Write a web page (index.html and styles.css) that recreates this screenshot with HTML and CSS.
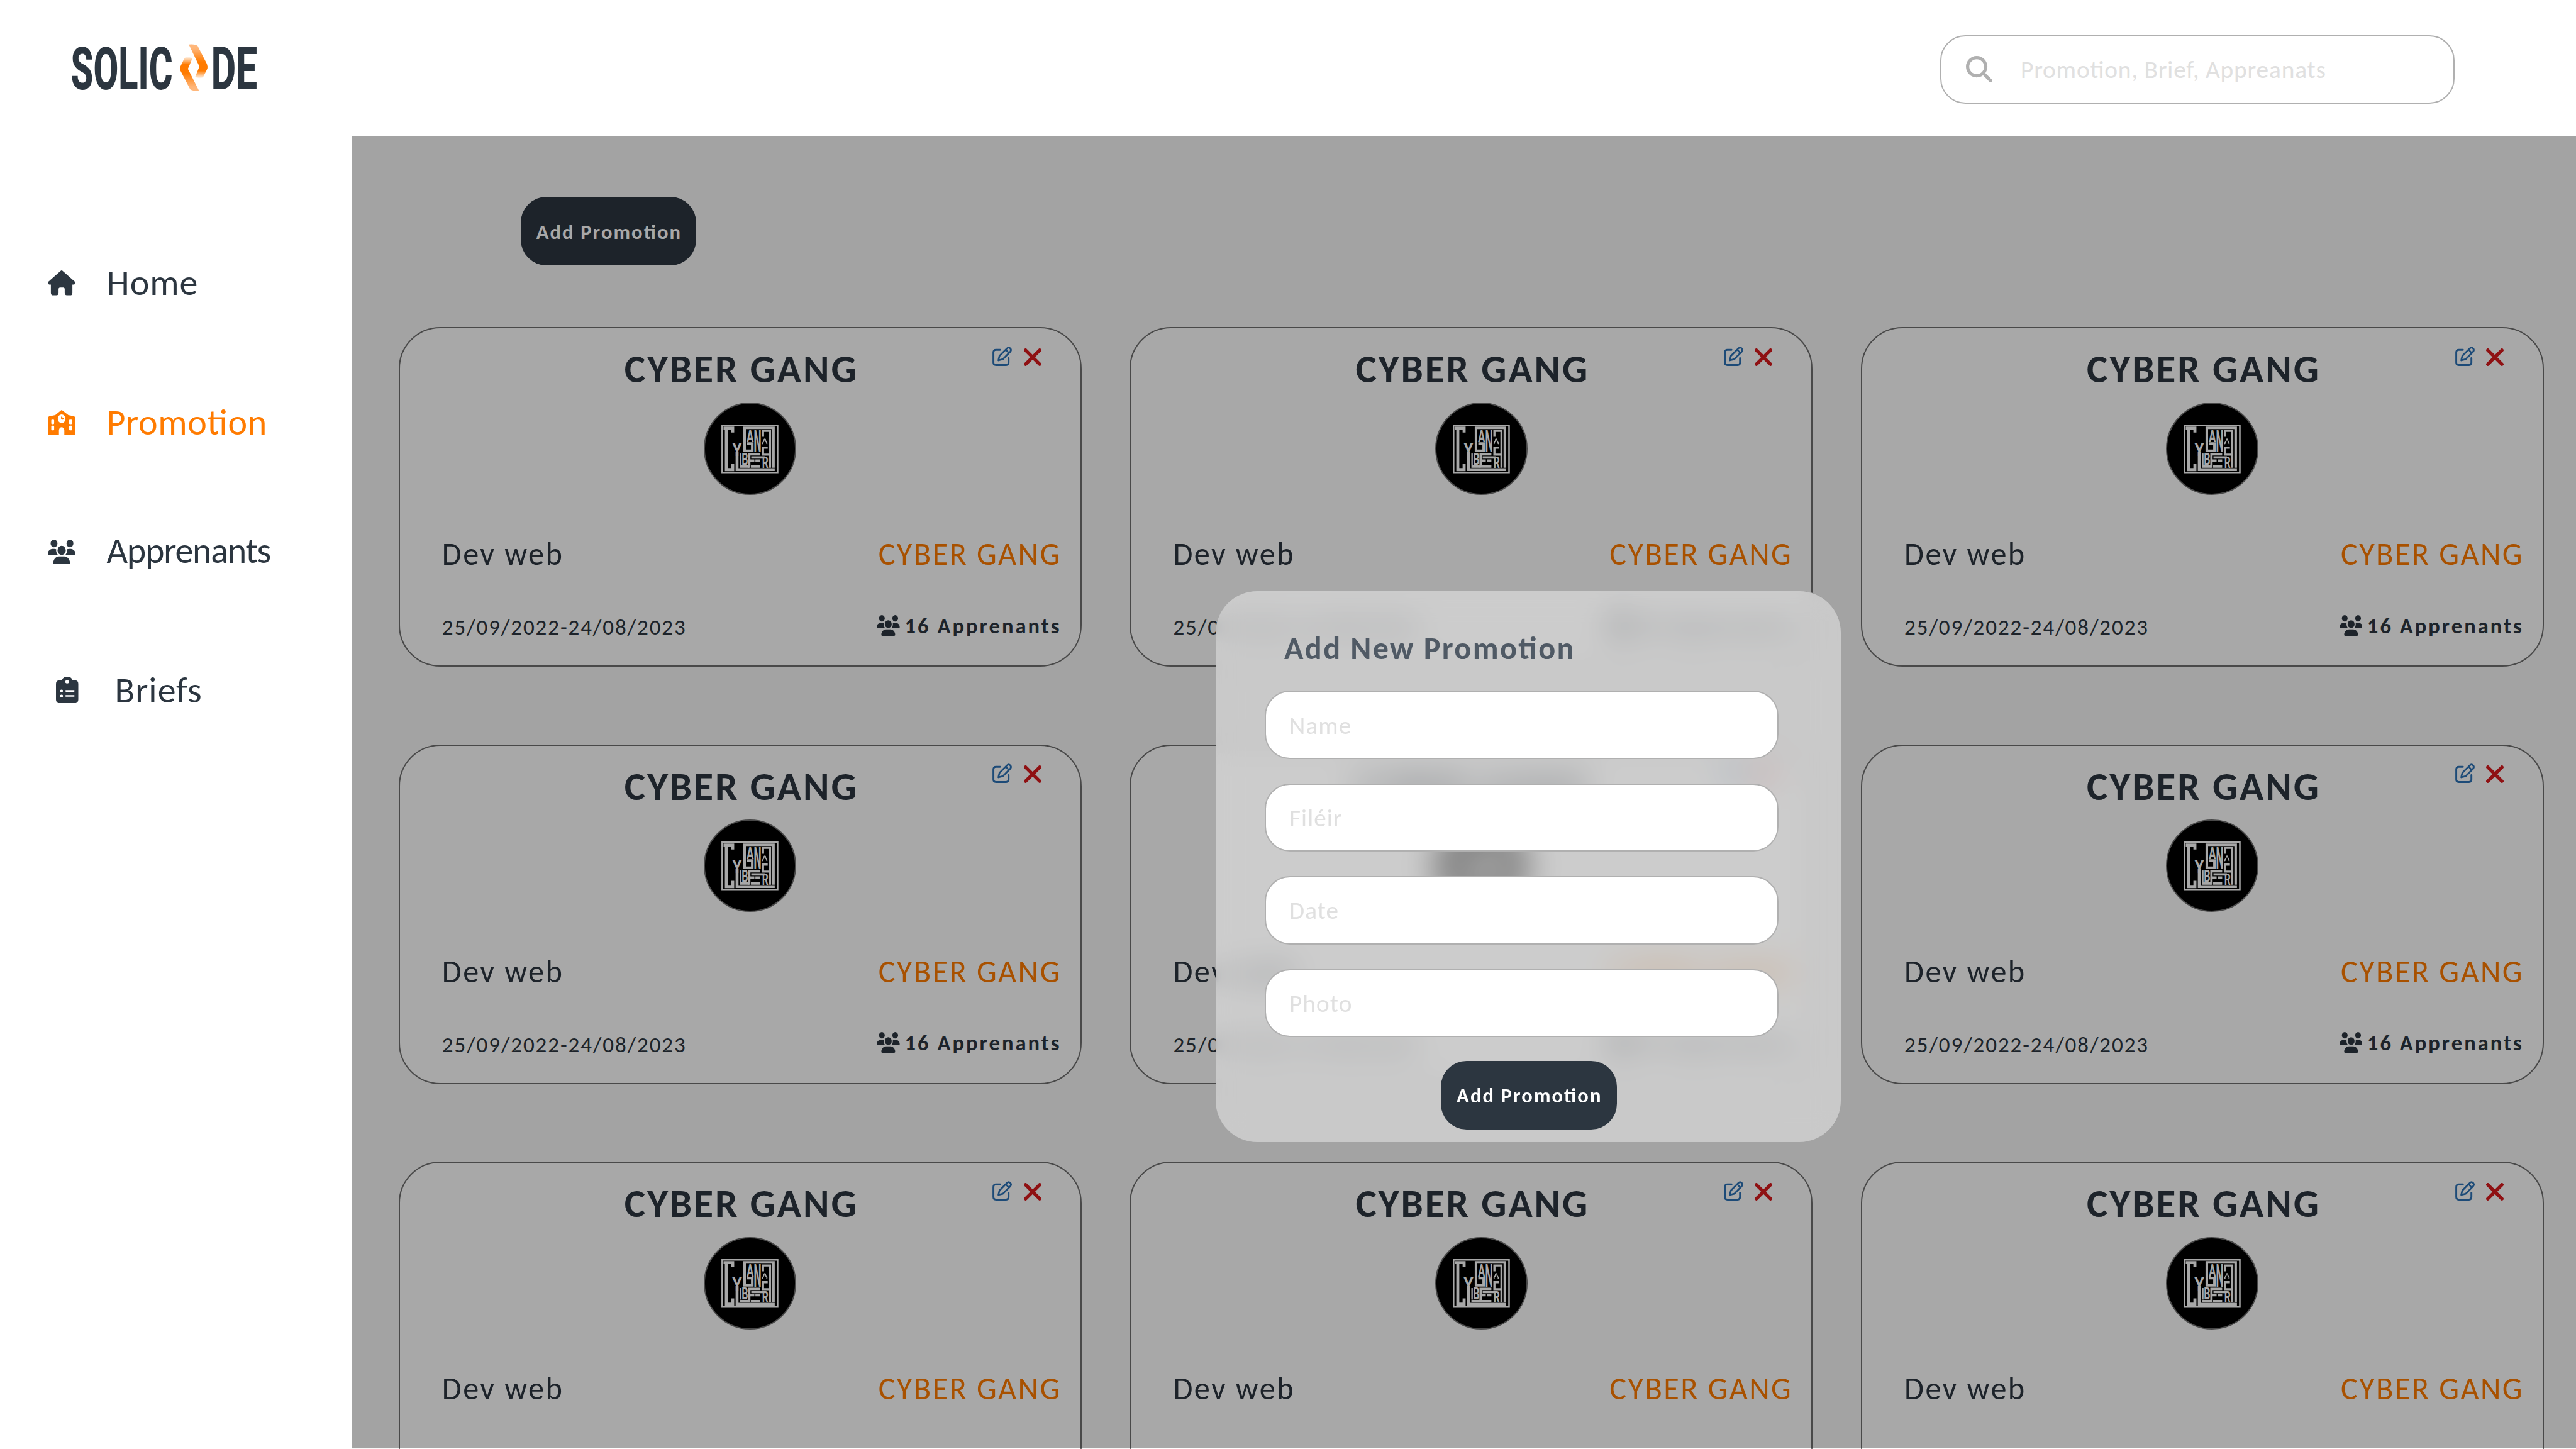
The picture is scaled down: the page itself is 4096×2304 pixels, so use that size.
FILE: index.html
```html
<!DOCTYPE html>
<html lang="fr">
<head>
<meta charset="utf-8">
<title>Solicode - Promotion</title>
<link rel="stylesheet" href="styles.css">
</head>
<body>
<svg class="defs" width="0" height="0" aria-hidden="true">
  <defs>
    <linearGradient id="arrowDown" x1="0" y1="155" x2="0" y2="456" gradientUnits="userSpaceOnUse">
      <stop offset="0" stop-color="#ffb87d"/>
      <stop offset=".12" stop-color="#ffb578"/>
      <stop offset=".52" stop-color="#ff7b00"/>
      <stop offset=".78" stop-color="#ff7b00"/>
      <stop offset="1" stop-color="#ff7b00" stop-opacity=".08"/>
    </linearGradient>
    <linearGradient id="arrowUp" x1="0" y1="569" x2="0" y2="267" gradientUnits="userSpaceOnUse">
      <stop offset="0" stop-color="#ffb87d"/>
      <stop offset=".12" stop-color="#ffb578"/>
      <stop offset=".52" stop-color="#ff7b00"/>
      <stop offset=".78" stop-color="#ff7b00"/>
      <stop offset="1" stop-color="#ff7b00" stop-opacity=".08"/>
    </linearGradient>
    <symbol id="users" viewBox="0 0 640 512" preserveAspectRatio="none">
      <path d="M144 0a80 80 0 1 1 0 160A80 80 0 1 1 144 0zM512 0a80 80 0 1 1 0 160A80 80 0 1 1 512 0zM0 298.7C0 239.8 47.8 192 106.7 192h42.7c15.9 0 31 3.5 44.6 9.7c-1.3 7.2-1.9 14.7-1.9 22.3c0 38.2 16.8 72.5 43.3 96H21.3C9.6 320 0 310.4 0 298.7zM405.3 320h-.7c26.6-23.5 43.3-57.8 43.3-96c0-7.6-.7-15-1.9-22.3c13.6-6.3 28.7-9.7 44.6-9.7h42.7C592.2 192 640 239.8 640 298.7c0 11.8-9.6 21.3-21.3 21.3H405.3zM224 224a96 96 0 1 1 192 0 96 96 0 1 1 -192 0zM128 485.3C128 411.7 187.7 352 261.3 352H378.7C452.3 352 512 411.7 512 485.3c0 14.7-11.9 26.7-26.7 26.7H154.7c-14.7 0-26.7-11.9-26.7-26.7z"/>
    </symbol>
    <symbol id="edit" viewBox="0 0 31 31" overflow="visible">
      <g fill="none" stroke="currentColor" stroke-linecap="round" stroke-linejoin="round">
        <path stroke-width="2.9" d="M12.2 5.3H5.7Q1.6 5.3 1.6 9.2V25.6Q1.6 29.5 5.7 29.5H21.9Q25.7 29.5 25.7 25.6V18.5"/>
        <path stroke-width="2.7" d="M9.5 22L11.2 15L23.2 2.9Q25.8.5 28.4 2.9Q30.8 5.4 28.4 8.2L16.7 20.1Z"/>
        <path stroke-width="2.5" d="M21.6 5.4L25.8 9.8"/>
      </g>
    </symbol>
    <symbol id="cross" viewBox="0 0 28 28">
      <path d="M2.8 2.8L25.2 25.2M25.2 2.8L2.8 25.2" fill="none" stroke="currentColor" stroke-width="5.4" stroke-linecap="round"/>
    </symbol>
    <symbol id="crest" viewBox="145 121 827 827">
      <circle cx="558.5" cy="534.5" r="408" fill="#000" stroke="#707070" stroke-width="11"/>
      <g fill="none" stroke="#fff">
        <path stroke-width="14" d="M310 325H806V747H310Z"/>
        <path stroke-width="27" d="M404 389V349.500H322M347.500 336V735M334 721.500H404V669"/>
        <path stroke-width="23" d="M768.500 704V347H510.500V553H579V488H531"/>
        <path stroke-width="19" d="M675 427V375H738V705M738 587H675V525H717"/>
        <path stroke-width="26" d="M443 560V721.500H780"/>
        <path stroke-width="21" d="M570 613H690M552 705V584H648M552 640.500H598M607 640.500H648M567 694H648"/>
        <path stroke-width="13" d="M475 577V680"/>
        <path stroke-width="22" d="M469 694H552"/>
        <path stroke-width="10" d="M673 494C666 470 684 478 684 462C684 444 698 444 698 462C698 478 716 470 709 494"/>
      </g>
      <g class="crest-type">
        <text x="400" y="600" font-size="162" textLength="87" lengthAdjust="spacingAndGlyphs">Y</text>
        <text x="529" y="473" font-size="157" textLength="62" lengthAdjust="spacingAndGlyphs">A</text>
        <text x="592" y="564" font-size="284" textLength="68" lengthAdjust="spacingAndGlyphs">N</text>
        <text x="484" y="679" font-size="142" textLength="58" lengthAdjust="spacingAndGlyphs">B</text>
        <text x="667" y="705" font-size="140" textLength="56" lengthAdjust="spacingAndGlyphs">R</text>
      </g>
    </symbol>
  </defs>
</svg>

<div class="page">
  <header class="header">
    <svg class="logo" viewBox="100 140 1270 450" preserveAspectRatio="none" role="img" aria-label="Solicode">
      <text x="115" y="557" font-size="530" textLength="680" lengthAdjust="spacingAndGlyphs">SOLIC</text>
      <path fill="url(#arrowDown)" d="M903 155Q947 150 962 168L1024 330Q1030 352 1027 372L998 450Q990 458 970 456L945 448L974 352Z"/>
      <path fill="url(#arrowUp)" d="M971 569Q925 573 912 556L848 392Q842 370 848 350L875 275Q882 266 905 268L928 276L897 373Z"/>
      <text x="1052" y="557" font-size="530" textLength="308" lengthAdjust="spacingAndGlyphs">DE</text>
    </svg>
    <label class="search">
      <svg class="search-icon" viewBox="0 0 512 512"><path d="M416 208c0 45.900-14.900 88.300-40 122.700L502.600 457.400c12.500 12.500 12.500 32.800 0 45.300s-32.800 12.500-45.300 0L330.700 376c-34.400 25.200-76.800 40-122.700 40C93.100 416 0 322.900 0 208S93.100 0 208 0S416 93.100 416 208zM208 352a144 144 0 1 0 0-288 144 144 0 1 0 0 288z"/></svg>
      <span>Promotion, Brief, Appreanats</span>
    </label>
  </header>

  <div class="body">
    <nav class="sidebar">
      <a class="nav-item">
        <svg class="nav-icon home" viewBox="107 158 144 183" preserveAspectRatio="none"><path d="M174 161Q179 156 184 161L248 240Q251 244 251 250Q250 261 243 261H235V321Q234 339 224 339H206Q195 338 195 321V295Q195 283 187 283H171Q163 283 163 295V321Q163 338 152 339H134Q124 339 123 321V261H115Q108 261 107 250Q107 244 110 240Z"/></svg>
        <span>Home</span>
      </a>
      <a class="nav-item active">
        <svg class="nav-icon school" viewBox="107 1178 144 182" preserveAspectRatio="none"><path fill-rule="evenodd" d="M176 1180Q179 1177 182 1180L214 1214L244 1223Q251 1227 251 1237V1346Q250 1359 242 1359H193V1325C191 1295 167 1295 165 1325V1359H116Q108 1359 107 1346V1237Q107 1227 114 1223L146 1214ZM179 1210a20 31 0 1 0 0 62a20 31 0 1 0 0-62ZM129 1247Q125 1247 125 1253V1274Q125 1280 129 1280H136Q140 1280 140 1274V1253Q140 1247 136 1247ZM129 1291Q125 1291 125 1297V1319Q125 1325 129 1325H136Q140 1325 140 1319V1297Q140 1291 136 1291ZM222 1247Q218 1247 218 1253V1274Q218 1280 222 1280H229Q233 1280 233 1274V1253Q233 1247 229 1247ZM222 1291Q218 1291 218 1297V1319Q218 1325 222 1325H229Q233 1325 233 1319V1297Q233 1291 229 1291Z"/><path d="M176 1229Q176 1225 179 1225Q183 1225 183 1229V1236H186Q190 1236 190 1241Q190 1247 186 1247H180Q176 1247 176 1241Z"/></svg>
        <span>Promotion</span>
      </a>
      <a class="nav-item apprenants">
        <svg class="nav-icon people"><use href="#users"/></svg>
        <span>Apprenants</span>
      </a>
      <a class="nav-item briefs">
        <svg class="nav-icon clipboard" viewBox="151 1157 117 179" preserveAspectRatio="none"><path fill-rule="evenodd" d="M183 1180C188 1150 231 1150 236 1180H248Q267 1181 267 1204V1310Q267 1334 248 1335H170Q151 1334 151 1310V1204Q151 1181 170 1180ZM209 1180a10 11 0 1 0 0 22a10 11 0 1 0 0-22ZM180 1243a8 9 0 1 0 0 18a8 9 0 1 0 0-18ZM180 1277a8 9 0 1 0 0 18a8 9 0 1 0 0-18ZM204 1247Q199 1247 199 1252Q199 1258 204 1258H243Q248 1258 248 1252Q248 1247 243 1247ZM204 1280Q199 1280 199 1285Q199 1291 204 1291H243Q248 1291 248 1285Q248 1280 243 1280Z"/></svg>
        <span>Briefs</span>
      </a>
    </nav>

    <main class="content">
      <button class="btn add">Add Promotion</button>
      <div class="grid" id="grid"></div>
    </main>
  </div>

  <div class="overlay"></div>

  <div class="frost fine"></div>
  <div class="frost medium"></div>
  <div class="frost coarse"></div>
  <section class="modal">
    <h2>Add New Promotion</h2>
    <div class="fields">
      <label class="field"><span>Name</span></label>
      <label class="field"><span>Filéir</span></label>
      <label class="field"><span>Date</span></label>
      <label class="field"><span>Photo</span></label>
    </div>
    <button class="btn">Add Promotion</button>
  </section>
</div>

<template id="card">
  <article class="card">
    <div class="card-head">
      <h3>CYBER GANG</h3>
      <div class="actions">
        <svg class="edit"><use href="#edit"/></svg>
        <svg class="cross"><use href="#cross"/></svg>
      </div>
    </div>
    <svg class="crest"><use href="#crest"/></svg>
    <div class="row subject"><span>Dev web</span><span class="brand">CYBER GANG</span></div>
    <div class="row meta">
      <span class="dates">25/09/2022-24/08/2023</span>
      <span class="count"><svg><use href="#users"/></svg>16 Apprenants</span>
    </div>
  </article>
</template>
<script src="cards.js"></script>
</body>
</html>
```
FILE: cards.js
```js
const grid = document.getElementById('grid');
const card = document.getElementById('card');
for (let i = 0; i < 9; i++) {
  grid.appendChild(card.content.cloneNode(true));
}
```
FILE: styles.css
```css
* { box-sizing: border-box; }

body {
  margin: 0;
  background: #fff;
  color: #2c3640;
  font-family: Calibri, Carlito, Lato, sans-serif;
  font-feature-settings: "liga" 1;
}

svg { display: block; flex: none; fill: currentColor; }
.defs { position: absolute; }
h2, h3 { margin: 0; font-weight: 700; }

.page {
  position: relative;
  width: 4096px;
  height: 2304px;
  overflow: hidden;
  display: flex;
  flex-direction: column;
}

/* Header */
.header {
  flex: none;
  height: 216px;
  padding: 0 193px 0 109px;
  display: flex;
  justify-content: space-between;
  align-items: center;
}
.logo {
  width: 302.4px;
  height: 80px;
  overflow: visible;
  font-family: Roboto, sans-serif;
  font-weight: 800;
}
.search {
  width: 818px;
  height: 109px;
  margin-top: 4px;
  padding-left: 38.5px;
  border: 2px solid #b0b0b0;
  border-radius: 40px;
  display: flex;
  align-items: center;
  gap: 45.5px;
  color: #e0e0e0;
  font-size: 39.4px;
  letter-spacing: 0.8px;
}
.search-icon { width: 42px; height: 42px; color: #b0b0b0; }

.body { flex: 1; min-height: 0; display: flex; }

/* Sidebar */
.sidebar {
  flex: none;
  width: 559px;
  padding: 199px 0 0 76px;
}
.nav-item {
  display: flex;
  align-items: flex-start;
  gap: 49.5px;
  margin-bottom: 152px;
  font-size: 58px;
  line-height: 70px;
  letter-spacing: 1px;
}
.nav-item.active { color: #ff7b00; letter-spacing: 0.65px; margin-bottom: 133.8px; }
.nav-item.apprenants { letter-spacing: -1.26px; }
.nav-item.briefs { padding-left: 13.2px; gap: 57.6px; }
.nav-icon { width: 44px; height: 40px; margin-top: 14.8px; }
.nav-icon.people { height: 39px; margin-top: 17px; }
.nav-icon.clipboard { width: 35.8px; height: 42.5px; margin-top: 13.1px; }

/* Content */
.content {
  flex: 1;
  min-width: 0;
  overflow: hidden;
  padding: 97.4px 0 0 74.6px;
  background: #f8f8f8;
}
.btn {
  display: block;
  width: 279.6px;
  height: 108.6px;
  padding: 2px 0 0 2px;
  border: 0;
  border-radius: 41px;
  background: #2c3640;
  color: #fff;
  font: 700 32.6px Calibri, Carlito, Lato, sans-serif;
  font-feature-settings: "liga" 1;
  letter-spacing: 2.1px;
  white-space: nowrap;
}
.btn.add { margin-left: 194px; }

.grid {
  margin-top: 98.5px;
  display: grid;
  grid-template-columns: repeat(3, 1086px);
  grid-auto-rows: 540px;
  gap: 123.5px 76.67px;
}
.card {
  border: 2px solid #707070;
  border-radius: 66px;
  background: #fff;
}
.card-head {
  padding: 26px 61.8px 0 65px;
  display: grid;
  grid-template-columns: 1fr auto 1fr;
}
.card-head h3 {
  grid-column: 2;
  padding: 1px 0 0 1px;
  font-size: 63.1px;
  line-height: 75px;
  letter-spacing: 2.95px;
}
.actions {
  justify-self: end;
  display: flex;
  gap: 18.6px;
  padding-top: 2.3px;
}
.edit { width: 31px; height: 31px; color: #2c72b6; overflow: visible; }
.cross { width: 28px; height: 28px; margin-top: 3px; color: #d91b1e; }
.crest { width: 147px; height: 147px; margin: 15.5px 0 0 483.4px; }
.crest-type { fill: #fff; font-family: Roboto, sans-serif; font-weight: 700; }

.row {
  display: flex;
  justify-content: space-between;
  align-items: flex-start;
  padding: 0 30px 0 67.2px;
}
.subject {
  margin-top: 64.2px;
  font-size: 50.3px;
  line-height: 60px;
  letter-spacing: 2.4px;
}
.brand { color: #ff7b00; }
.meta { margin-top: 62.6px; line-height: 42px; }
.dates { padding-top: 2.4px; font-size: 35.1px; letter-spacing: 1.88px; }
.count { display: flex; gap: 7.5px; font-size: 34.5px; font-weight: 700; letter-spacing: 3.05px; }
.count svg { width: 36.8px; height: 33px; margin-top: 3.8px; }

/* Dialog */
.overlay {
  position: absolute;
  left: 559px;
  top: 215.5px;
  width: 3537px;
  height: 2086.5px;
  background: rgba(0, 0, 0, 0.34);
}
.modal,
.frost {
  position: absolute;
  left: 1932.7px;
  top: 940.4px;
  width: 994.6px;
  height: 875.3px;
  border-radius: 66px;
}
.frost.fine { backdrop-filter: blur(4px); }
.frost.medium { backdrop-filter: blur(8px); }
.frost.coarse { backdrop-filter: blur(14px); }
.modal {
  padding: 61px 0 0 78.3px;
  background: rgba(255, 255, 255, 0.42);
  backdrop-filter: blur(20px);
}
.modal h2 {
  padding-left: 31px;
  font-size: 50.2px;
  line-height: 60px;
  letter-spacing: 2.4px;
  color: #505a65;
}
.fields { margin-top: 37px; display: grid; gap: 39px; }
.field {
  width: 817px;
  height: 108.4px;
  padding: 2px 0 0 37px;
  border: 2px solid #b0b0b0;
  border-radius: 40px;
  background: #fff;
  display: flex;
  align-items: center;
  color: #e0e0e0;
  font-size: 39.2px;
  letter-spacing: 1.1px;
}
.modal .btn { margin: 38px 0 0 280px; }
```
